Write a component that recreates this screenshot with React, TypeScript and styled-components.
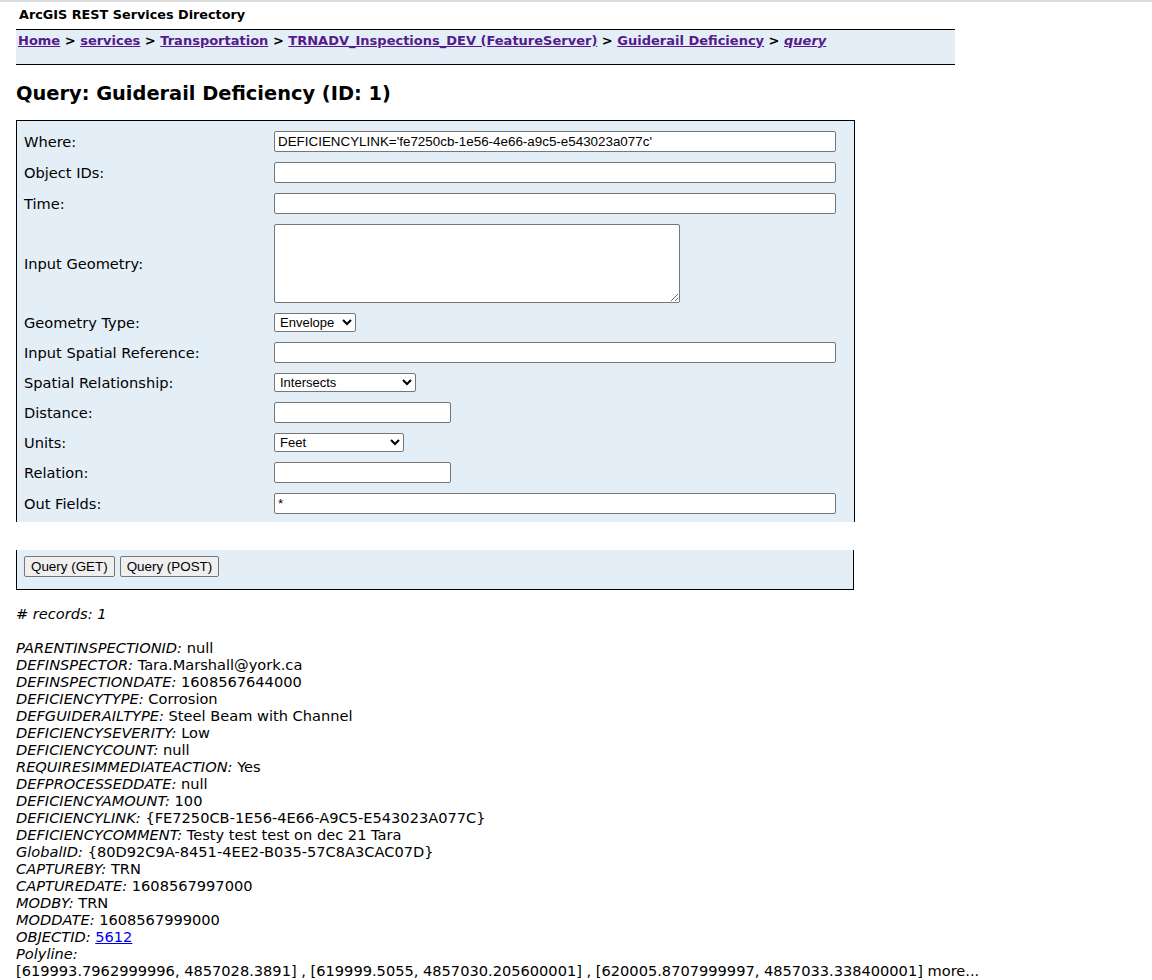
import styled, { createGlobalStyle } from "styled-components";

const GlobalStyle = createGlobalStyle`
  body {
    margin: 0;
    background: #fff;
    color: #000;
    font-family: "DejaVu Sans", Verdana, sans-serif;
    font-size: 14.6px;
  }
`;

const Page = styled.div`
  width: 1152px;
  min-height: 980px;
  border-top: 2px solid #dcdcdc;
  box-sizing: border-box;
`;

const TitleBar = styled.div`
  width: 936px;
  margin-left: 19px;
  padding: 5px 0 6px;
  font-size: 12.8px;
  font-weight: bold;
  line-height: 16px;
`;

const Breadcrumbs = styled.div`
  width: 939px;
  margin-left: 16px;
  height: 36px;
  box-sizing: border-box;
  border-top: 1px solid #000;
  border-bottom: 1px solid #000;
  background: #e4eef7;
  padding: 2px 0 0 2px;
  font-size: 13px;
  font-weight: bold;
  line-height: 17px;
`;

const Crumb = styled.a<{ $italic?: boolean }>`
  color: #551a8b;
  text-decoration: underline;
  font-style: ${(p) => (p.$italic ? "italic" : "normal")};
`;

const Heading = styled.h2`
  margin: 17px 0 0 16px;
  font-size: 19.4px;
  line-height: 24px;
  font-weight: bold;
`;

const FormPanel = styled.div`
  width: 839px;
  margin: 14px 0 0 16px;
  box-sizing: border-box;
  background: #e4eef7;
  border: 1px solid #000;
  border-bottom: none;
  padding: 10px 0 8px 7px;
  display: grid;
  grid-template-columns: 250px 1fr;
  align-items: center;
  row-gap: 10px;
`;

const Label = styled.label`
  font-size: 14.6px;
  line-height: 17px;
`;

const Field = styled.div`
  display: flex;
  align-items: center;
`;

const TextInput = styled.input<{ $w: number }>`
  width: ${(p) => p.$w}px;
  height: 21px;
  box-sizing: border-box;
  margin: 0;
  padding: 1px 3px;
  font-family: "Liberation Sans", Arial, sans-serif;
  font-size: 13.4px;
  border: 1px solid #767676;
  border-radius: 2px;
  background: #fff;
`;

const TextArea = styled.textarea`
  width: 406px;
  height: 79px;
  box-sizing: border-box;
  margin: 0;
  font-family: "Liberation Mono", monospace;
  border: 1px solid #767676;
  border-radius: 2px;
  resize: both;
`;

const Select = styled.select<{ $w: number }>`
  width: ${(p) => p.$w}px;
  height: 19px;
  box-sizing: border-box;
  margin: 0;
  padding: 0 0 0 1px;
  font-family: "Liberation Sans", Arial, sans-serif;
  font-size: 13px;
  border: 1px solid #767676;
  border-radius: 2px;
  background: #fff;
  color: #000;
`;

const Gap = styled.div`
  height: 28px;
`;

const ButtonPanel = styled.div`
  width: 838px;
  margin-left: 16px;
  box-sizing: border-box;
  background: #e4eef7;
  border: 1px solid #000;
  border-top: none;
  padding: 6px 0 12px 7px;
  display: flex;
  gap: 5px;
`;

const Button = styled.button`
  height: 21px;
  padding: 1px 6px;
  font-family: "Liberation Sans", Arial, sans-serif;
  font-size: 13.4px;
  color: #000;
  background: #efefef;
  border: 1px solid #767676;
  border-radius: 2px;
`;

const Results = styled.div`
  margin: 15px 0 0 16px;
  font-size: 14.6px;
  line-height: 17px;
  white-space: nowrap;
`;

const Count = styled.div`
  font-style: italic;
  margin-bottom: 17px;
`;

const Key = styled.i``;

const IdLink = styled.a`
  color: #0000ee;
  text-decoration: underline;
`;

const crumbs = [
  "Home",
  "services",
  "Transportation",
  "TRNADV_Inspections_DEV (FeatureServer)",
  "Guiderail Deficiency",
];

const attributes: [string, string][] = [
  ["PARENTINSPECTIONID", "null"],
  ["DEFINSPECTOR", "Tara.Marshall@york.ca"],
  ["DEFINSPECTIONDATE", "1608567644000"],
  ["DEFICIENCYTYPE", "Corrosion"],
  ["DEFGUIDERAILTYPE", "Steel Beam with Channel"],
  ["DEFICIENCYSEVERITY", "Low"],
  ["DEFICIENCYCOUNT", "null"],
  ["REQUIRESIMMEDIATEACTION", "Yes"],
  ["DEFPROCESSEDDATE", "null"],
  ["DEFICIENCYAMOUNT", "100"],
  ["DEFICIENCYLINK", "{FE7250CB-1E56-4E66-A9C5-E543023A077C}"],
  ["DEFICIENCYCOMMENT", "Testy test test on dec 21 Tara"],
  ["GlobalID", "{80D92C9A-8451-4EE2-B035-57C8A3CAC07D}"],
  ["CAPTUREBY", "TRN"],
  ["CAPTUREDATE", "1608567997000"],
  ["MODBY", "TRN"],
  ["MODDATE", "1608567999000"],
];

export default function App() {
  return (
    <Page>
      <GlobalStyle />
      <TitleBar>ArcGIS REST Services Directory</TitleBar>
      <Breadcrumbs>
        {crumbs.map((c) => (
          <span key={c}>
            <Crumb href="#">{c}</Crumb>
            {" > "}
          </span>
        ))}
        <Crumb href="#" $italic>
          query
        </Crumb>
      </Breadcrumbs>
      <Heading>Query: Guiderail Deficiency (ID: 1)</Heading>

      <FormPanel>
        <Label>Where:</Label>
        <Field>
          <TextInput $w={562} defaultValue="DEFICIENCYLINK='fe7250cb-1e56-4e66-a9c5-e543023a077c'" />
        </Field>
        <Label>Object IDs:</Label>
        <Field>
          <TextInput $w={562} />
        </Field>
        <Label>Time:</Label>
        <Field>
          <TextInput $w={562} />
        </Field>
        <Label>Input Geometry:</Label>
        <Field>
          <TextArea />
        </Field>
        <Label>Geometry Type:</Label>
        <Field>
          <Select $w={82} defaultValue="Envelope">
            <option>Envelope</option>
            <option>Point</option>
            <option>Polyline</option>
            <option>Polygon</option>
          </Select>
        </Field>
        <Label>Input Spatial Reference:</Label>
        <Field>
          <TextInput $w={562} />
        </Field>
        <Label>Spatial Relationship:</Label>
        <Field>
          <Select $w={142} defaultValue="Intersects">
            <option>Intersects</option>
            <option>Contains</option>
            <option>Crosses</option>
          </Select>
        </Field>
        <Label>Distance:</Label>
        <Field>
          <TextInput $w={177} />
        </Field>
        <Label>Units:</Label>
        <Field>
          <Select $w={130} defaultValue="Feet">
            <option>Feet</option>
            <option>Meters</option>
          </Select>
        </Field>
        <Label>Relation:</Label>
        <Field>
          <TextInput $w={177} />
        </Field>
        <Label>Out Fields:</Label>
        <Field>
          <TextInput $w={562} defaultValue="*" />
        </Field>
      </FormPanel>
      <Gap />
      <ButtonPanel>
        <Button>Query (GET)</Button>
        <Button>Query (POST)</Button>
      </ButtonPanel>

      <Results>
        <Count># records: 1</Count>
        {attributes.map(([k, v]) => (
          <div key={k}>
            <Key>{k}:</Key> {v}
          </div>
        ))}
        <div>
          <Key>OBJECTID:</Key> <IdLink href="#">5612</IdLink>
        </div>
        <div>
          <Key>Polyline:</Key>
        </div>
        <div>
          [619993.7962999996, 4857028.3891] , [619999.5055, 4857030.205600001] ,
          [620005.8707999997, 4857033.338400001] more...
        </div>
      </Results>
    </Page>
  );
}
